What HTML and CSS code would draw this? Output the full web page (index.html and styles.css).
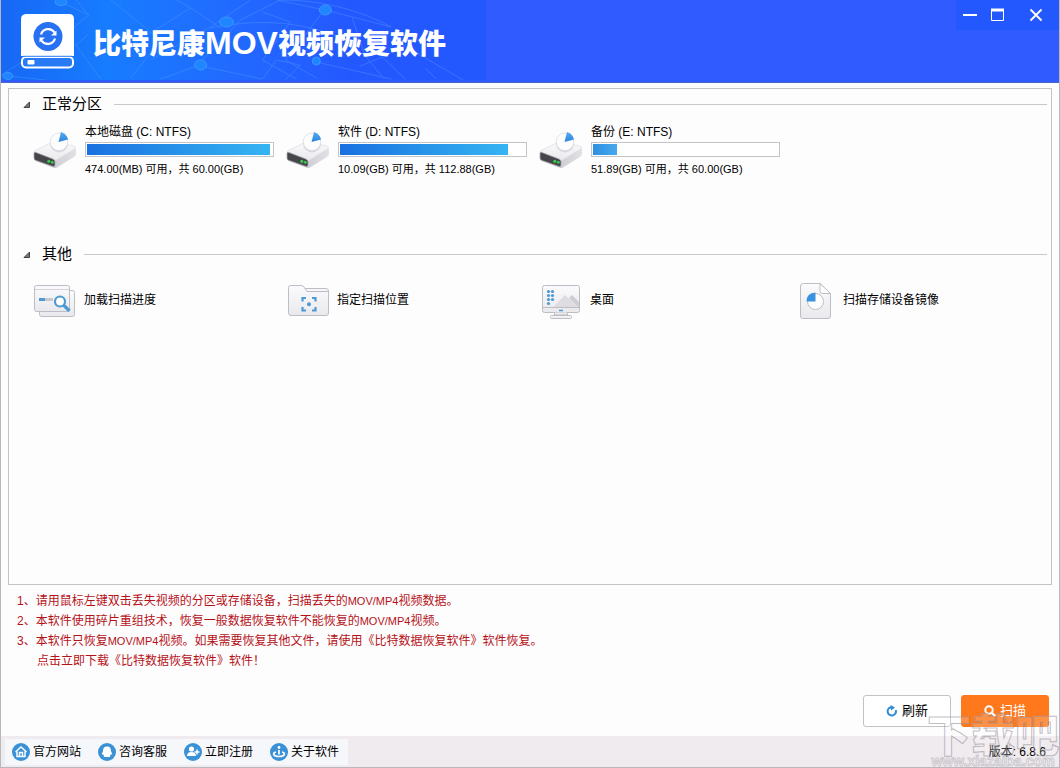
FILE: index.html
```
<!DOCTYPE html>
<html lang="zh-CN">
<head>
<meta charset="utf-8">
<meta name="viewport" content="width=device-width, initial-scale=1">
<title>比特尼康MOV视频恢复软件</title>
<link rel="stylesheet" href="styles.css">
</head>
<body>
<svg class="defs" width="0" height="0" aria-hidden="true">
  <defs>
    <linearGradient id="shell" x1="0" y1="0" x2="0" y2="1"><stop offset="0" stop-color="#fbfafc"/><stop offset="1" stop-color="#e9e8ec"/></linearGradient>
    <linearGradient id="side" x1="0" y1="0" x2="1" y2="0"><stop offset="0" stop-color="#bdbcc0"/><stop offset="1" stop-color="#e2e1e5"/></linearGradient>
    <linearGradient id="pie" x1="0" y1="0" x2="0" y2="1"><stop offset="0" stop-color="#57aaf0"/><stop offset="1" stop-color="#2b85dc"/></linearGradient>
    <symbol id="drive" viewBox="0 0 44 38">
      <path d="M1 20V25Q1 28 3 29L20 35.500Q22 36.500 24 35.500L41 25Q43 24 43 22V17Z" fill="url(#side)"/>
      <path d="M2 18.500Q0 20.500 3 21.500L20 28Q22 29 24 28L41 17.500Q44 16 42 14.500L25 10Q23 9 20 10Z" fill="url(#shell)" stroke="#d6d5d9" stroke-width=".6"/>
      <path d="M1 21Q1 20 3 20.500L20 27Q22 28 22 29.500V33Q22 35 20 34.500L3 28.500Q1 28 1 26Z" fill="#45464b" stroke="#a9a8ad" stroke-width=".8"/>
      <circle cx="15.800" cy="29.300" r="1.500" fill="#35d04b"/><circle cx="19.300" cy="30.300" r="1.400" fill="#35d04b"/>
      <circle cx="26" cy="11.500" r="9" fill="#d9d8de"/>
      <circle cx="26" cy="9.800" r="8.800" fill="#fdfdfe" stroke="#d9d8de" stroke-width=".7"/>
      <path d="M25.500 10L28 0Q34 2 35 7.500Z" fill="url(#pie)"/>
    </symbol>
  </defs>
</svg>
<div class="window">
  <header class="titlebar">
    <div class="brand">
      <svg class="net" viewBox="0 0 486 80" preserveAspectRatio="none" fill="none" stroke="#55a3ff" stroke-width="1" aria-hidden="true">
        <g opacity=".38">
          <path d="M0 75L60 38L88 15L60 2M75 0L88 15M88 34L75 45L100 79M110 0L160 40L130 78M130 45L190 8L220 28M190 8L176 0M150 60L210 27L250 0M196 66L240 20L280 0M196 66L160 79M200 66L262 79M262 12L290 22L262 60L296 79M276 0L325 10L391 27M324 10L285 60L316 78M262 79L276 60L300 65L285 80M360 66L382 57L405 79M391 38L463 80M425 68L436 79M6 76L45 80M316 62L391 79M352 18L365 56L384 79"/>
          <path d="M210 28C250 20 300 18 350 42M280 0C310 0 350 5 391 27"/>
        </g>
        <g fill="#1f86ff" stroke="#3a96ff"><ellipse cx="60" cy="2" rx="6" ry="3.500"/><ellipse cx="226" cy="22" rx="7" ry="5"/><ellipse cx="325" cy="10" rx="6" ry="5"/><ellipse cx="200" cy="65" rx="6" ry="5"/><ellipse cx="316" cy="61" rx="4" ry="4"/><ellipse cx="7" cy="76" rx="5" ry="3.500"/></g>
      </svg>
      <svg class="logo" viewBox="0 0 54 56" aria-hidden="true">
        <path d="M6 0H48Q53 0 53 5V42H0V5Q0 0 6 0Z" fill="#fff"/>
        <rect x="1" y="43" width="51" height="10.500" rx="4" fill="#287bf5" stroke="#fff" stroke-width="2"/>
        <rect x="6.500" y="46" width="7" height="4.500" rx="1" fill="#fff"/>
        <path d="M2 42.300H51" stroke="#287bf5" stroke-width="1"/>
        <circle cx="27" cy="22.500" r="14.500" fill="#2871f2"/>
        <path d="M20 20.500A7.500 7.500 0 0 1 33.500 18.500M34 24.500A7.500 7.500 0 0 1 20.500 26.500" fill="none" stroke="#fff" stroke-width="2.200"/>
        <path d="M35.500 16.500V21.500H30ZM18.500 28.500V23.500H24Z" fill="#fff"/>
      </svg>
      <h1 class="title">比特尼康<span class="title-latin">MOV</span>视频恢复软件</h1>
    </div>
    <div class="controls">
      <button type="button" class="control" aria-label="最小化"><svg width="14" height="14" viewBox="0 0 14 14"><path d="M0 7H14" stroke="#fff" stroke-width="2"/></svg></button>
      <button type="button" class="control" aria-label="最大化"><svg width="14" height="14" viewBox="0 0 14 14"><path d="M.5 2V12.500H12.500V2M0 2H13" fill="none" stroke="#fff"/><path d="M0 2H13" stroke="#fff" stroke-width="3"/></svg></button>
      <button type="button" class="control close" aria-label="关闭"><svg width="14" height="14" viewBox="0 0 14 14"><path d="M1.500 1.500L12.500 12.500M12.500 1.500L1.500 12.500" stroke="#fff" stroke-width="1.800"/></svg></button>
    </div>
  </header>

  <main class="main">
    <div class="panel">
      <details class="section disks" open>
        <summary class="heading"><svg width="7" height="7" viewBox="0 0 7 7"><path d="M6.500 1V6.500H1Z" fill="#777" stroke="#444"/></svg><h2 class="heading-text">正常分区</h2></summary>
        <div class="grid">
          <div class="disk"><svg class="drive"><use href="#drive"/></svg><div class="info"><label for="c">本地磁盘 (C: NTFS)</label><progress id="c" class="bar" max="100" value="99"></progress><p class="size">474.00(MB) 可用，共 60.00(GB)</p></div></div>
          <div class="disk"><svg class="drive"><use href="#drive"/></svg><div class="info"><label for="d">软件 (D: NTFS)</label><progress id="d" class="bar" max="100" value="91"></progress><p class="size">10.09(GB) 可用，共 112.88(GB)</p></div></div>
          <div class="disk"><svg class="drive"><use href="#drive"/></svg><div class="info"><label for="e">备份 (E: NTFS)</label><progress id="e" class="bar low" max="100" value="13"></progress><p class="size">51.89(GB) 可用，共 60.00(GB)</p></div></div>
        </div>
      </details>
      <details class="section" open>
        <summary class="heading"><svg width="7" height="7" viewBox="0 0 7 7"><path d="M6.500 1V6.500H1Z" fill="#777" stroke="#444"/></svg><h2 class="heading-text">其他</h2></summary>
        <div class="grid tools">
          <button type="button" class="tool">
            <svg class="tool-icon" viewBox="0 0 44 38" fill="url(#shell)" stroke="#bfbdc4"><rect x="6.500" y="7.500" width="35" height="26" rx="2"/><rect x="1.500" y="2.500" width="35" height="26" rx="2"/><path d="M2 6.500H36" stroke="#d5d3d9"/><path d="M12 16.500H20" stroke="#c9c8cd" stroke-width="3"/><path d="M6 16.500H12" stroke="#4c9ad4" stroke-width="3"/><circle cx="27" cy="18.500" r="5" fill="#fff" stroke="#4c9ad4" stroke-width="2.200"/><path d="M30.500 22L36.500 28" stroke="#4c9ad4" stroke-width="3.200"/></svg>
            <span class="tool-name">加载扫描进度</span></button>
          <button type="button" class="tool">
            <svg class="tool-icon" viewBox="-1 0 44 38" fill="url(#shell)" stroke="#bfbdc4"><path d="M15 5.500H39Q41.500 5.500 41.500 8V12H15Z"/><path d="M3.500 2.500H14Q16 2.500 17 4L20 8.500H41.500V30Q41.500 32.500 39 32.500H4Q1.500 32.500 1.500 30V4.500Q1.500 2.500 3.500 2.500Z"/><path d="M15.500 18.500V15H19M25 15H28.500V18.500M28.500 24V27.500H25M19 27.500H15.500V24" fill="none" stroke="#4c9ad4" stroke-width="2.200"/><circle cx="22" cy="21.300" r="2" fill="#4c9ad4" stroke="none"/></svg>
            <span class="tool-name">指定扫描位置</span></button>
          <button type="button" class="tool">
            <svg class="tool-icon" viewBox="-1 0 44 38" fill="url(#shell)" stroke="#bfbdc4"><rect x="2.500" y="2.500" width="37" height="27" rx="2"/><path d="M13 24.500L25 12L38 24.500Z" fill="#dddce0" stroke="none"/><path d="M29 15L32 12L39 19V24H38Z" fill="#cfced3" stroke="none"/><path d="M3 24.500H39M14.500 29.500V32H27.500V29.500"/><rect x="10.500" y="32.500" width="21" height="3" rx="1"/><path d="M19 27.500H23" stroke="#4c9ad4" stroke-width="1.500"/><g fill="#4c9ad4" stroke="none"><circle cx="8.500" cy="8.500" r="1.600"/><circle cx="12.500" cy="8.500" r="1.600"/><circle cx="8.500" cy="12.500" r="1.600"/><circle cx="12.500" cy="12.500" r="1.600"/><circle cx="8.500" cy="16.500" r="1.600"/><circle cx="12.500" cy="16.500" r="1.600"/><circle cx="8.500" cy="20.500" r="1.600"/></g></svg>
            <span class="tool-name">桌面</span></button>
          <button type="button" class="tool">
            <svg class="tool-icon" viewBox="-2 1 44 38" fill="url(#shell)" stroke="#bfbdc4"><path d="M9.500 1.500H26L36.500 11.500V34Q36.500 36.500 34 36.500H8.500Q6.500 36.500 6.500 34V4Q6.500 1.500 9.500 1.500Z"/><path d="M26 1.500V9Q26 11.500 28.500 11.500H36.500Z" fill="#fff"/><circle cx="21.500" cy="19.500" r="8" fill="#fff"/><path d="M21.500 19.500H12.500Q12.500 11 21.500 10.500Z" fill="#3a93df" stroke="none"/></svg>
            <span class="tool-name">扫描存储设备镜像</span></button>
        </div>
      </details>
    </div>

    <div class="notes">
      <p>1、请用鼠标左键双击丢失视频的分区或存储设备，扫描丢失的<span class="fmt">MOV/MP4</span>视频数据。</p>
      <p>2、本软件使用碎片重组技术，恢复一般数据恢复软件不能恢复的<span class="fmt">MOV/MP4</span>视频。</p>
      <p>3、本软件只恢复<span class="fmt">MOV/MP4</span>视频。如果需要恢复其他文件，请使用《比特数据恢复软件》软件恢复。</p>
      <p><a class="download" href="#download">点击立即下载《比特数据恢复软件》软件！</a></p>
    </div>

    <div class="actions">
      <button type="button" class="action"><svg width="12" height="12" viewBox="0 0 12 12"><path d="M5 2.200A4.200 4.200 0 1 0 9.800 5" fill="none" stroke="#318bd3" stroke-width="2"/><path d="M4.500 0L9 2.400L5 5.500Z" fill="#318bd3"/></svg>刷新</button>
      <button type="button" class="action primary"><svg width="12" height="12" viewBox="0 0 12 12"><circle cx="5" cy="5" r="3.700" fill="none" stroke="#fff" stroke-width="2"/><path d="M7.500 7.500L11.300 11.300" stroke="#fff" stroke-width="2.400"/></svg>扫描</button>
    </div>
  </main>

  <footer class="footer">
    <nav class="links">
      <a class="link" href="#site"><svg width="18" height="18" viewBox="0 0 18 18"><circle cx="9" cy="9" r="9" fill="#3b91d5"/><path d="M3.500 9L9 4L14.500 9M5 8.500V13.500H13V8.500M7.500 13V9.500H10.500V13" fill="none" stroke="#fff" stroke-width="1.400"/></svg>官方网站</a>
      <a class="link" href="#service"><svg width="18" height="18" viewBox="0 0 18 18"><circle cx="9" cy="9" r="9" fill="#3b91d5"/><path d="M9 3.500C6 3.500 5 5.500 5 8L3.700 11.500L5.500 11.500L6 14H12L12.500 11.500L14.300 11.500L13 8C13 5.500 12 3.500 9 3.500Z" fill="#fff"/></svg>咨询客服</a>
      <a class="link" href="#register"><svg width="18" height="18" viewBox="0 0 18 18"><circle cx="9" cy="9" r="9" fill="#3b91d5"/><circle cx="7.500" cy="6" r="2.600" fill="#fff"/><path d="M3 13Q3 9 7.500 9Q12 9 12 13Z" fill="#fff"/><path d="M13 6.500V11.500M10.500 9H15.500" stroke="#fff" stroke-width="1.500"/></svg>立即注册</a>
      <a class="link" href="#about"><svg width="18" height="18" viewBox="0 0 18 18"><circle cx="9" cy="9" r="9" fill="#3b91d5"/><circle cx="9" cy="4.500" r="1.400" fill="#fff"/><path d="M9 7V11.500M6 9C2 10 3 13.500 9 13.500S16 10 12 9" fill="none" stroke="#fff" stroke-width="1.700"/></svg>关于软件</a>
    </nav>
    <span class="version">版本: 6.8.6</span>
  </footer>
  <div class="mark" aria-hidden="true"><span class="mark-name">下载吧</span><span class="mark-url">www.xiazaiba.com</span></div>
</div>
</body>
</html>
```
FILE: styles.css
```
* { box-sizing: border-box; }
body, h1, h2, p { margin: 0; }
body { font: 12px/16px "Liberation Sans", "Noto Sans CJK SC", sans-serif; color: #000; background: #fefdfe; }
button { font: inherit; color: inherit; cursor: pointer; }
a { color: inherit; text-decoration: none; }
svg { display: block; flex: none; }
.defs { position: absolute; }

.window { position: relative; display: flex; flex-direction: column; min-height: 100vh; border: solid #b9b7bc; border-width: 0 1px 1px; overflow: hidden; }

.titlebar { display: flex; justify-content: space-between; align-items: flex-start; height: 83px; background: #305cff; border-bottom: 1px solid #4865c8; }
.brand { position: relative; display: flex; align-items: center; gap: 18px; width: 485px; height: 80px; padding: 4px 0 0 20px; background: linear-gradient(90deg, #1768f5 0, #177cff 22%, #216bff 46%, #2458ff 72%); }
.net { position: absolute; inset: 0; width: 100%; height: 100%; }
.logo { position: relative; width: 54px; height: 56px; }
.title { position: relative; font: 900 28px/40px "Noto Sans CJK SC", sans-serif; color: #fff; white-space: nowrap; }
.title-latin { font: 700 32px/40px "Liberation Sans", sans-serif; }
.controls { display: flex; gap: 14px; height: 30px; padding: 0 16px 0 7px; background: #2458ff; }
.control { display: grid; place-items: center; width: 14px; padding: 0; border: 0; background: none; }
.close { margin-left: 10px; }

.main { display: flex; flex: 1; flex-direction: column; padding: 5px 7px 9px; }
.panel { flex: 1; border: 1px solid #c4c2c7; padding: 4px 4px 0 0; }
.disks { min-height: 150px; }
.heading { display: flex; align-items: center; gap: 12px; height: 22px; padding-left: 14px; list-style: none; cursor: pointer; }
.heading::after { content: ""; flex: 1; height: 1px; background: #c9c8cc; }
.heading-text { font-size: 15px; font-weight: 400; line-height: 20px; }
.grid { display: grid; grid-template-columns: repeat(4, 1fr); padding: 9px 2px 0 24px; }
.disk { display: flex; gap: 8px; }
.drive { width: 44px; height: 38px; margin-top: 8px; }
.info { display: flex; flex-direction: column; gap: 2px; width: 189px; }
.bar { appearance: none; width: 100%; height: 15px; padding: 1px; border: 1px solid #c1c5c9; background: #fff; }
.bar::-webkit-progress-bar { background: #fff; }
.bar::-webkit-progress-value { background: linear-gradient(90deg, #1970e0, #35b5f2); }
.low::-webkit-progress-value { background: linear-gradient(90deg, #2e8fe0, #45a9ee); }
.size { font-size: 11px; line-height: 20px; }
.tools { padding-top: 18px; }
.tool { display: flex; align-items: center; gap: 7px; padding: 0; border: 0; background: none; text-align: left; }
.tool-icon { width: 44px; height: 38px; }
.tool-name { padding-bottom: 4px; }

.notes { padding: 6px 0 0 9px; line-height: 20px; color: #b51218; }
.fmt { font-size: 11px; }
.download { padding-left: 20px; }
.actions { display: flex; justify-content: flex-end; gap: 10px; padding: 24px 3px 0; }
.action { display: flex; align-items: center; justify-content: center; gap: 4px; width: 88px; height: 32px; padding: 0; border: 1px solid #c4c1c8; border-radius: 3px; background: #fff; font-size: 13px; }
.primary { border-color: #ff781c; background: #ff781c; color: #fff; }

.footer { display: flex; align-items: center; justify-content: space-between; height: 31px; padding: 0 13px 0 4px; background: #efebee; }
.links { display: flex; gap: 17px; padding: 4px 9px 4px 7px; background: #f5f7fb; }
.link { display: flex; align-items: center; gap: 3px; }
.version { white-space: nowrap; }

/* Translucent site mark over the lower right corner */
.mark { position: absolute; right: 0; bottom: 0; display: flex; flex-direction: column; align-items: center; pointer-events: none; color: rgba(255, 255, 255, .2); }
.mark-name { font: 900 44px/44px "Noto Sans CJK SC", sans-serif; -webkit-text-stroke: 1px rgba(150, 145, 155, .6); }
.mark-url { font: 700 14px/12px "Liberation Sans", sans-serif; -webkit-text-stroke: 1px rgba(150, 145, 155, .4); }
```
